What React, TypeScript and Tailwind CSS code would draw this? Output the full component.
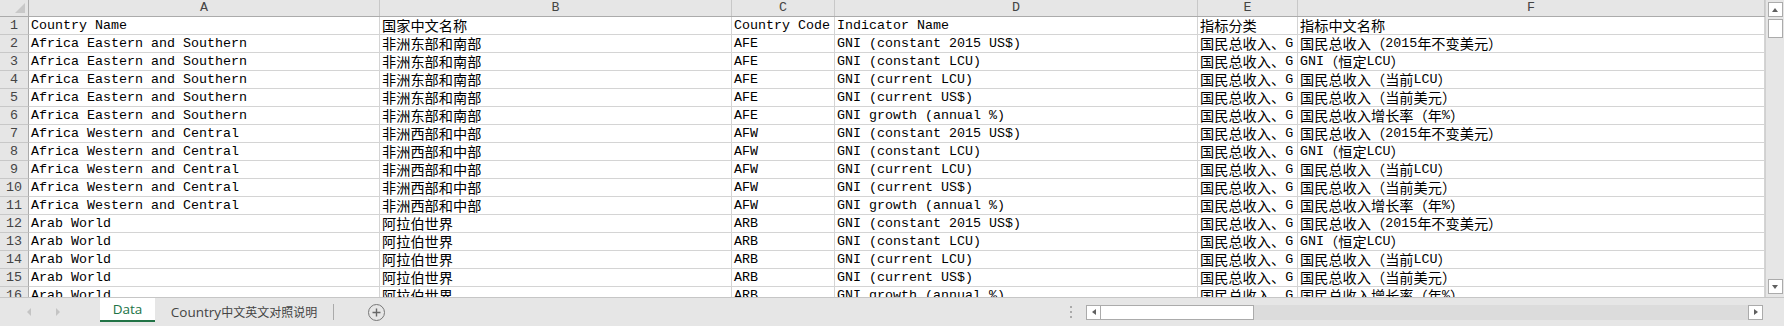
import React from "react";

const CJK = /([\u3000-\u303f\u3400-\u9fff\uff00-\uffef]+)/;

const latin = "[font-family:'Liberation_Mono',monospace] text-[13.33px]";
const cjk = "[font-family:'Noto_Sans_CJK_SC',sans-serif] text-[14.2px]";

function Txt({ text }: { text: string }) {
  const parts = text.split(CJK).filter((p) => p !== "");
  return (
    <>
      {parts.map((p, i) => (
        <span key={i} className={CJK.test(p) ? cjk : latin}>
          {p}
        </span>
      ))}
    </>
  );
}

const cols = [
  { key: "A", w: "w-[351px]" },
  { key: "B", w: "w-[352px]" },
  { key: "C", w: "w-[103px]" },
  { key: "D", w: "w-[363px]" },
  { key: "E", w: "w-[100px]" },
  { key: "F", w: "flex-1" },
];

const indicators: [string, string][] = [
  ["GNI (constant 2015 US$)", "国民总收入（2015年不变美元）"],
  ["GNI (constant LCU)", "GNI（恒定LCU）"],
  ["GNI (current LCU)", "国民总收入（当前LCU）"],
  ["GNI (current US$)", "国民总收入（当前美元）"],
  ["GNI growth (annual %)", "国民总收入增长率（年%）"],
];

const countries: [string, string, string][] = [
  ["Africa Eastern and Southern", "非洲东部和南部", "AFE"],
  ["Africa Western and Central", "非洲西部和中部", "AFW"],
  ["Arab World", "阿拉伯世界", "ARB"],
];

const rows: string[][] = [
  ["Country Name", "国家中文名称", "Country Code", "Indicator Name", "指标分类", "指标中文名称"],
];
countries.forEach(([en, zh, code]) => {
  indicators.forEach(([ind, indZh]) => {
    rows.push([en, zh, code, ind, "国民总收入、G", indZh]);
  });
});

function ScrollBtn({ dir }: { dir: "up" | "down" | "left" | "right" }) {
  const tri = {
    up: "border-x-[3px] border-x-transparent border-b-[4px] border-b-[#606060]",
    down: "border-x-[3px] border-x-transparent border-t-[4px] border-t-[#606060]",
    left: "border-y-[3px] border-y-transparent border-r-[4px] border-r-[#606060]",
    right: "border-y-[3px] border-y-transparent border-l-[4px] border-l-[#606060]",
  }[dir];
  return (
    <div className="w-[15px] h-[15px] bg-white border border-[#ababab] flex items-center justify-center shrink-0">
      <div className={`w-0 h-0 ${tri}`} />
    </div>
  );
}

export default function App() {
  return (
    <div className="w-[1784px] h-[326px] flex flex-col bg-[#e6e6e6] overflow-hidden text-black">
      <div className="h-[298px] flex border-b border-[#c6c6c6]">
        {/* sheet grid */}
        <div className="flex-1 flex flex-col overflow-hidden bg-white">
          <div className="h-[17px] flex shrink-0 bg-[#e6e6e6] border-b border-[#ababab]">
            <div className="w-[29px] border-r border-[#ababab] relative shrink-0">
              <div className="absolute right-[3px] bottom-[3px] w-0 h-0 border-l-[10px] border-l-transparent border-b-[10px] border-b-[#c8c8c8]" />
            </div>
            {cols.map((c) => (
              <div
                key={c.key}
                className={`${c.w} shrink-0 border-r border-[#c8c8c8] flex items-center justify-center text-[#444] leading-[16px] ${latin}`}
              >
                {c.key}
              </div>
            ))}
          </div>
          {rows.map((r, i) => (
            <div key={i} className="h-[18px] flex shrink-0">
              <div
                className={`w-[29px] shrink-0 bg-[#e6e6e6] border-r border-b border-r-[#ababab] border-b-[#c8c8c8] flex items-end justify-center leading-[17px] text-[#444] ${latin}`}
              >
                {i + 1}
              </div>
              {cols.map((c, j) => (
                <div
                  key={c.key}
                  className={`${c.w} shrink-0 border-r border-b border-[#d4d4d4] flex items-end overflow-hidden whitespace-nowrap pl-[2px] leading-[17px]`}
                >
                  <Txt text={r[j]} />
                </div>
              ))}
            </div>
          ))}
        </div>
        {/* vertical scrollbar */}
        <div className="w-[19px] bg-[#e6e6e6] border-l border-[#d0d0d0] flex flex-col items-center pt-[2px] pb-[3px]">
          <ScrollBtn dir="up" />
          <div className="w-[15px] h-[19px] mt-[2px] bg-white border border-[#ababab]" />
          <div className="flex-1" />
          <ScrollBtn dir="down" />
        </div>
      </div>

      {/* sheet tabs */}
      <div className="flex-1 flex items-center">
        <div className="w-[100px] h-full flex items-center">
          <div className="ml-[27px] w-0 h-0 border-y-[4px] border-y-transparent border-r-[4px] border-r-[#c4c4c4]" />
          <div className="ml-[25px] w-0 h-0 border-y-[4px] border-y-transparent border-l-[4px] border-l-[#c4c4c4]" />
        </div>
        <div className="h-full flex flex-col">
          <div className="w-[55px] h-[24px] bg-white border-b-2 border-[#217346] flex items-center justify-center text-[#217346] text-[13.5px] [font-family:'Open_Sans',sans-serif]">
            Data
          </div>
        </div>
        <div className="w-[178px] h-full flex items-center justify-center text-[#444] [font-family:'Open_Sans',sans-serif]">
          <span className="text-[13.5px]">Country</span>
          <span className="text-[12px] [font-family:'Noto_Sans_CJK_SC',sans-serif]">中文英文对照说明</span>
        </div>
        <div className="w-px h-[16px] bg-[#aaaaaa]" />
        <div className="ml-[34px] w-[17px] h-[17px] rounded-full border border-[#777] flex items-center justify-center text-[#666]">
          <svg width="11" height="11" viewBox="0 0 11 11">
            <path d="M5.5 1.5v8M1.5 5.5h8" stroke="#666" strokeWidth="1.4" />
          </svg>
        </div>
        <div className="flex-1" />
        <div className="flex flex-col gap-[3px] mr-[14px]">
          <div className="w-[2px] h-[2px] bg-[#aaa]" />
          <div className="w-[2px] h-[2px] bg-[#aaa]" />
          <div className="w-[2px] h-[2px] bg-[#aaa]" />
        </div>
        <div className="w-[677px] h-[15px] bg-[#dcdcdc] flex mr-[21px]">
          <ScrollBtn dir="left" />
          <div className="w-[153px] h-[15px] bg-white border border-[#ababab] border-l-0" />
          <div className="flex-1" />
          <ScrollBtn dir="right" />
        </div>
      </div>
    </div>
  );
}
